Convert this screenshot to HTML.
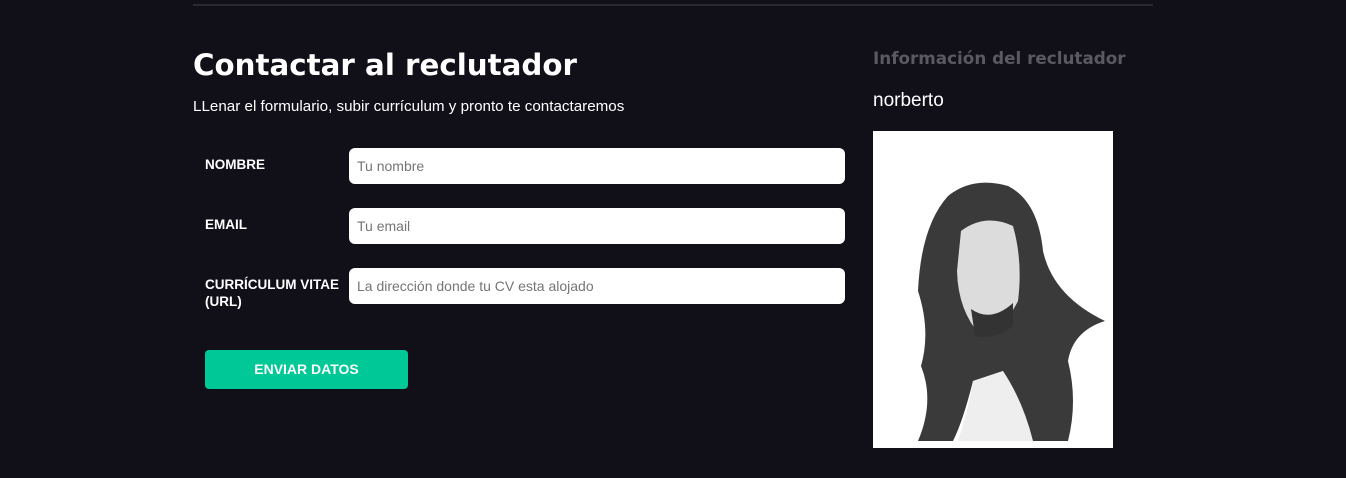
<!DOCTYPE html>
<html><head><meta charset="utf-8"><style>
*{margin:0;padding:0;box-sizing:border-box}
body{width:1346px;height:478px;background:#110f18;font-family:"Liberation Sans",sans-serif;color:#fff;position:relative;overflow:hidden}
.line{position:absolute;left:193px;top:4px;width:960px;height:2px;background:#2a2a2e}
h1{position:absolute;left:193px;top:48px;font-weight:bold;font-family:"DejaVu Sans","Liberation Sans",sans-serif;font-size:29.3px}
.sub{position:absolute;left:193px;top:98px;font-size:15.2px}
.lbl{position:absolute;left:205px;font-size:13.5px;font-weight:bold;line-height:17px}
.inp{position:absolute;left:349px;width:496px;height:36px;background:#fff;border-radius:6px;color:#757575;font-size:14px;padding-left:8px;line-height:36px}
.btn{position:absolute;left:205px;top:350px;width:203px;height:39px;background:#00c897;border-radius:4px;font-weight:bold;font-size:14px;text-align:center;line-height:39px}
h3{position:absolute;left:873px;top:48px;font-weight:bold;color:#5a5960;font-family:"DejaVu Sans","Liberation Sans",sans-serif;font-size:16.8px}
.name{position:absolute;left:873px;top:90px;font-size:19px}
.img{position:absolute;left:873px;top:131px;width:240px;height:317px;background:#fff}
</style></head><body>
<div class="line"></div>
<h1>Contactar al reclutador</h1>
<div class="sub">LLenar el formulario, subir currículum y pronto te contactaremos</div>
<div class="lbl" style="top:156px">NOMBRE</div>
<div class="inp" style="top:148px">Tu nombre</div>
<div class="lbl" style="top:216px">EMAIL</div>
<div class="inp" style="top:208px">Tu email</div>
<div class="lbl" style="top:276px">CURRÍCULUM VITAE<br>(URL)</div>
<div class="inp" style="top:268px">La dirección donde tu CV esta alojado</div>
<div class="btn">ENVIAR DATOS</div>
<h3>Información del reclutador</h3>
<div class="name">norberto</div>
<div class="img"><svg width="240" height="317" viewBox="0 0 240 317">
<rect width="240" height="317" fill="#fff"/>
<path d="M75 65 Q100 45 135 55 Q165 70 170 120 Q180 165 232 190 Q200 200 195 230 Q205 270 195 310 L150 310 Q140 260 130 240 L100 250 Q90 290 80 310 L45 310 Q62 270 48 235 Q58 200 45 160 Q48 95 75 65Z" fill="#3a3a3a"/>
<path d="M88 100 Q112 82 140 95 Q150 130 145 170 Q130 200 108 205 Q85 180 84 140Z" fill="#dcdcdc"/>
<path d="M98 178 Q118 192 140 172 L140 195 Q120 210 102 205Z" fill="#333"/>
<path d="M100 250 L130 240 Q150 270 160 310 L85 310 Q95 280 100 250Z" fill="#eee"/>
</svg></div>
</body></html>
